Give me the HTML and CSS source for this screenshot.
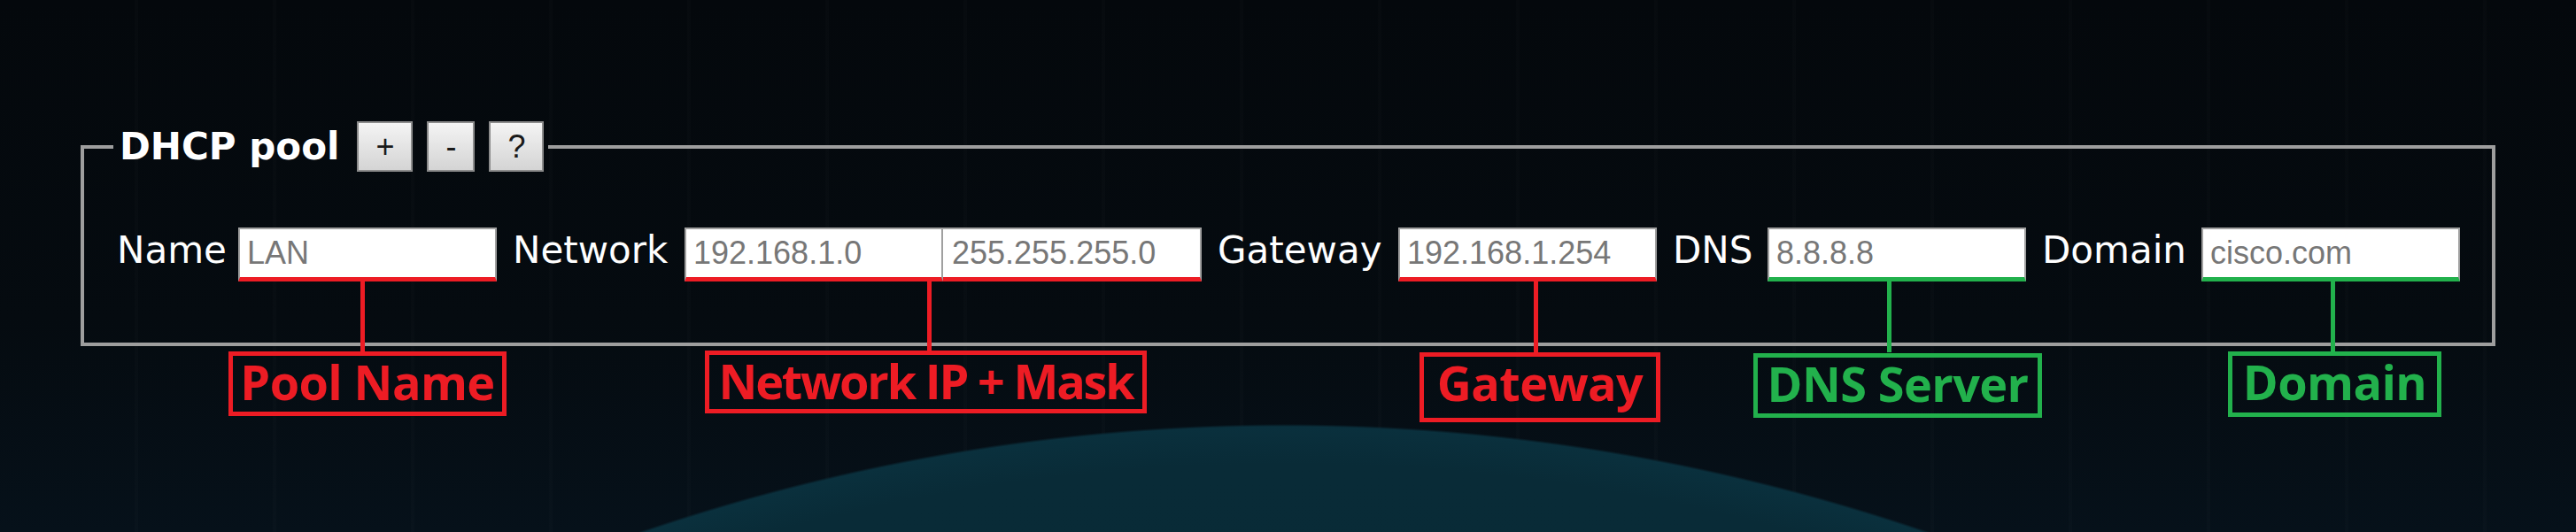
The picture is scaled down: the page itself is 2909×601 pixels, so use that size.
FILE: index.html
```html
<!DOCTYPE html>
<html lang="en">
<head>
<meta charset="utf-8">
<title>DHCP pool</title>
<link rel="stylesheet" href="styles.css">
</head>
<body>
<main class="page">
  <fieldset class="pool">
    <legend class="pool-legend">
      <div class="legend-row">
        <span class="legend-title">DHCP pool</span>
        <button class="btn" type="button">+</button>
        <button class="btn" type="button">-</button>
        <button class="btn" type="button">?</button>
      </div>
    </legend>
    <div class="fields">
      <div class="field">
        <label class="lbl lbl-name">Name</label>
        <input class="inp mark-red" type="text" value="LAN" readonly>
      </div>
      <div class="field">
        <label class="lbl lbl-network">Network</label>
        <input class="inp mark-red" type="text" value="192.168.1.0" readonly>
        <input class="inp inp-joined mark-red" type="text" value="255.255.255.0" readonly>
      </div>
      <div class="field">
        <label class="lbl lbl-gateway">Gateway</label>
        <input class="inp mark-red" type="text" value="192.168.1.254" readonly>
      </div>
      <div class="field">
        <label class="lbl lbl-dns">DNS</label>
        <input class="inp mark-green" type="text" value="8.8.8.8" readonly>
      </div>
      <div class="field">
        <label class="lbl lbl-domain">Domain</label>
        <input class="inp mark-green" type="text" value="cisco.com" readonly>
      </div>
    </div>
  </fieldset>

  <div class="leader red leader-name"></div>
  <div class="tag red tag-name">Pool Name</div>

  <div class="leader red leader-network"></div>
  <div class="tag red tag-network">Network IP + Mask</div>

  <div class="leader red leader-gateway"></div>
  <div class="tag red tag-gateway">Gateway</div>

  <div class="leader green leader-dns"></div>
  <div class="tag green tag-dns">DNS Server</div>

  <div class="leader green leader-domain"></div>
  <div class="tag green tag-domain">Domain</div>
</main>
</body>
</html>
```
FILE: styles.css
```css
html, body {
  margin: 0;
  padding: 0;
  width: 2909px;
  height: 601px;
  overflow: hidden;
}

body {
  background:
    radial-gradient(2245px circle at 1450px 2724px, #082733 0, #092b37 2200px, #0a303d 2242px, rgba(9, 43, 55, 0) 2245px),
    repeating-linear-gradient(90deg, rgba(255, 255, 255, 0) 0, rgba(255, 255, 255, 0) 152px, rgba(255, 255, 255, 0.01) 152px, rgba(255, 255, 255, 0.01) 156px),
    linear-gradient(180deg, #04080c 0, #050b10 60%, #06111a 100%);
  font-family: "DejaVu Sans", sans-serif;
}

.page {
  position: relative;
  width: 2909px;
  height: 601px;
  padding-top: 137px;
  box-sizing: border-box;
}

.pool {
  box-sizing: border-box;
  width: 2727px;
  margin: 0 0 0 91px;
  padding: 63px 30px 69px 37px;
  border: 4px solid #9e9e9e;
  min-inline-size: 0;
}

.pool-legend {
  margin-left: -4px;
  padding: 0 5px 0 7px;
}

.legend-row {
  display: flex;
  align-items: center;
  gap: 16px;
  height: 57px;
}

.legend-title {
  font-family: "DejaVu Sans", sans-serif;
  font-weight: bold;
  font-size: 42px;
  line-height: 57px;
  color: #ffffff;
  margin-right: 4px;
}

.btn {
  box-sizing: border-box;
  height: 57px;
  padding: 0 19px;
  margin: 0;
  border: 2px solid #8c8c8c;
  border-radius: 0;
  background: linear-gradient(180deg, #f4f4f4 0, #e4e4e4 50%, #d4d4d4 100%);
  font-family: "Liberation Sans", Arial, sans-serif;
  font-size: 36px;
  line-height: 50px;
  color: #1a1a1a;
}

.fields {
  display: flex;
  align-items: flex-start;
}

.field {
  display: flex;
  align-items: flex-start;
}

.field + .field {
  margin-left: 18px;
}

.lbl {
  flex: none;
  font-family: "DejaVu Sans", sans-serif;
  font-size: 42px;
  line-height: 51px;
  color: #ffffff;
  white-space: nowrap;
}

.lbl-name { width: 137px; }
.lbl-network { width: 194px; }
.lbl-gateway { width: 204px; }
.lbl-dns { width: 107px; }
.lbl-domain { width: 180px; }

.inp {
  flex: none;
  box-sizing: border-box;
  width: 292px;
  height: 61px;
  margin: 0;
  padding: 0 8px;
  border: 2px solid #a0a0a0;
  border-bottom-width: 5px;
  border-radius: 0;
  background: #ffffff;
  font-family: "Liberation Sans", Arial, sans-serif;
  font-size: 36px;
  color: #777777;
  outline: none;
}

.inp-joined {
  border-left: 0;
  padding-left: 10px;
}

.mark-red { border-bottom-color: #ed1c24; }
.mark-green { border-bottom-color: #22b14c; }

.leader {
  position: absolute;
  top: 318px;
  width: 5px;
  height: 80px;
}

.leader.red { background: #ed1c24; }
.leader.green { background: #22b14c; }

.leader-name { left: 407px; }
.leader-network { left: 1047px; }
.leader-gateway { left: 1732px; }
.leader-dns { left: 2131px; }
.leader-domain { left: 2632px; }

.tag {
  position: absolute;
  box-sizing: border-box;
  border: 5px solid;
  font-family: "Open Sans", sans-serif;
  font-weight: 700;
  font-size: 54px;
  line-height: 58px;
  text-align: center;
  white-space: nowrap;
  letter-spacing: -0.6px;
}

.tag.red { color: #ed1c24; border-color: #ed1c24; }
.tag.green { color: #22b14c; border-color: #22b14c; }

.tag-name { left: 258px; top: 397px; width: 314px; height: 73px; }
.tag-network { left: 796px; top: 396px; width: 499px; height: 71px; letter-spacing: -2.2px; }
.tag-gateway { left: 1603px; top: 398px; width: 272px; height: 79px; }
.tag-dns { left: 1980px; top: 399px; width: 326px; height: 73px; }
.tag-domain { left: 2516px; top: 397px; width: 241px; height: 74px; }
```
